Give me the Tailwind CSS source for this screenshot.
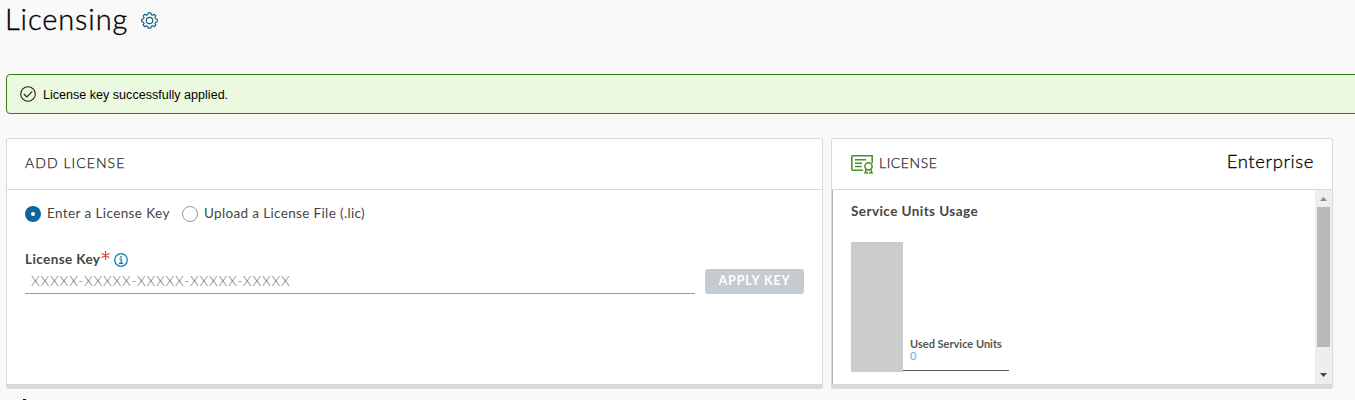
<!DOCTYPE html>
<html lang="en">
<head>
<meta charset="utf-8">
<title>Licensing</title>
<script src="https://cdn.jsdelivr.net/npm/@tailwindcss/browser@4"></script>
</head>
<body class="w-[1355px] h-[400px] overflow-hidden bg-[#f9f9f9] font-['Lato',sans-serif] text-[#454545] whitespace-nowrap">
<div class="flex flex-col h-[400px] pl-[6px]">
  <header class="flex items-center h-10 gap-[14px]">
    <h1 class="w-[122px] -ml-px -mt-[2px] text-[29px] leading-10 font-light tracking-[0.9px] text-black [-webkit-text-stroke:0.35px_black]"><span>Licensing</span></h1>
    <svg class="w-[17px] h-[17px] mt-px shrink-0" viewBox="0 0 16 16" fill="none" stroke="#0f628c" stroke-width="1.1" stroke-linejoin="round"><path d="M6.700 .8h2.600l.4 1.700 1.200.5 1.500-.9 1.600 1.600-.9 1.500.5 1.200 1.700.4v2.400l-1.700.4-.5 1.200.9 1.500-1.600 1.600-1.500-.9-1.200.5-.4 1.700H6.700l-.4-1.700-1.200-.5-1.500.9L2 12.300l.9-1.500-.5-1.200L.7 9.200V6.800l1.700-.4.5-1.200L2 3.700l1.600-1.600 1.500.9 1.200-.5z"/><circle cx="8" cy="8" r="3"/></svg>
  </header>
  <div class="mt-[34px] h-10 w-[1360px] shrink-0 rounded-[4px] border border-[#377a10] bg-[#ebf9e1] flex items-center pl-[13px] gap-[7px] font-['Liberation_Sans',sans-serif] text-[12.5px] text-black">
    <svg class="size-4" viewBox="0 0 16 16" fill="none" stroke="#222" stroke-width="1.1"><circle cx="8" cy="8" r="7.3"/><path d="M3.800 8l3 3L12.300 5.300"/></svg>
    <span class="pt-[2px] tracking-[0.03px]">License key successfully applied.</span>
  </div>
  <main class="mt-6 flex gap-2">
    <section class="w-[817px] h-[251px] rounded-[3px] border border-b-[5px] border-[#d9d9d9] bg-white">
      <div class="h-[51px] border-b border-[#d9d9d9] flex items-center pl-[18px] pb-[3px] text-[14px] text-[#222] font-light [-webkit-text-stroke:0.25px_#222] tracking-[1.05px]"><span>ADD LICENSE</span></div>
      <div class="px-[18px] pt-[14px] text-[13px]">
        <div class="flex items-center h-5">
          <span class="size-4 rounded-full bg-[#0f659b] flex items-center justify-center"><span class="size-1 rounded-full bg-white"></span></span>
          <span class="ml-[6px] w-[135px] -mt-px text-[13.5px] tracking-[0.4px]"><span>Enter a License Key</span></span>
          <span class="size-4 rounded-full border border-[#999]"></span>
          <span class="ml-[6px] -mt-px text-[13.5px] tracking-[0.35px]"><span>Upload a License File (.lic)</span></span>
        </div>
        <div class="mt-[25px] flex items-center h-5">
          <span class="w-[76px] mt-px text-[13.5px] font-bold tracking-[0.4px]">License Key</span>
          <svg class="size-[9px] mb-[7px] ml-[0px] mr-px" viewBox="0 0 9 9" stroke="#e8472c" stroke-width="1.100"><path d="M4.500 0v9M.6 2.200l7.800 4.600M8.400 2.200L.6 6.800"/></svg>
          <svg class="ml-[3px] mt-[2px] size-[14px]" viewBox="0 0 14 14" fill="none" stroke="#0079b8" stroke-width="1.200"><circle cx="7" cy="7" r="6.300"/><path d="M5.200 6h2v4.500M4.900 10.400h4.300"/><path d="M6.200 3.700h1.500" stroke-width="1.600"/></svg>
        </div>
        <div class="flex items-end h-[25px]">
          <div class="w-[670px] h-[25px] border-b border-[#999] pl-[6px] text-[14px] leading-[24px] font-light text-[#737373] tracking-[0.81px]"><span>XXXXX-XXXXX-XXXXX-XXXXX-XXXXX</span></div>
          <button class="ml-[10px] w-[99px] h-[25px] rounded-[3px] bg-[#c4ccd1] text-white text-[12.5px] font-bold tracking-[0.9px]">APPLY KEY</button>
        </div>
      </div>
    </section>
    <section class="w-[502px] h-[251px] rounded-[3px] border border-b-[5px] border-[#d9d9d9] bg-white">
      <div class="h-[51px] border-b border-[#d9d9d9] flex items-center justify-between pl-[19px] pr-[18px]">
        <div class="flex items-center gap-[5px] text-[14px] text-[#222]">
          <svg class="w-[23px] h-[19px]" viewBox="0 0 23 19" fill="none" stroke="#4b9128" stroke-width="1.600"><path d="M12 15.200H1.800a1 1 0 0 1-1-1V1.800a1 1 0 0 1 1-1h19.400V8M4 4.800h11M4 8.200h7M4 11.500h6.500"/><circle cx="17.500" cy="11.300" r="3.600"/><path d="M15.400 14.300l-1.400 3.500 1.900-.3.900 1.200M19.600 14.300l1.500 3.500-1.900-.3-.9 1.200" stroke-width="1.400"/></svg>
          <span class="font-light [-webkit-text-stroke:0.25px_#222] tracking-[0.55px] -mt-[3px]">LICENSE</span>
        </div>
        <span class="text-[18.5px] font-light [-webkit-text-stroke:0.3px_black] tracking-[0.6px] -mt-[5px] text-black">Enterprise</span>
      </div>
      <div class="flex h-[194px] border-l border-[#b5b5b5]">
        <div class="flex-1 pl-[18px] pt-[12px]">
          <div class="h-5 leading-[19px] text-[13.5px] font-bold tracking-[0.43px]"><span>Service Units Usage</span></div>
          <div class="mt-5 flex">
            <div class="w-[52px] h-[130px] bg-[#ccc]"></div>
            <div class="mt-[96px] h-[33px] w-[106px] border-b border-[#565656] pl-[7px] text-[11px] leading-3">
              <div class="font-bold text-[#565656]"><span>Used Service Units</span></div>
              <div class="text-[#6fa9cf]">0</div>
            </div>
          </div>
        </div>
        <div class="w-[17px] bg-[#eee] flex flex-col items-center">
          <svg class="w-[17px] h-[17px]" viewBox="0 0 17 17" fill="#8c8c8c"><path d="M5 11h7L8.500 7z"/></svg>
          <div class="w-[13px] h-[140px] bg-[#b9b9b9]"></div>
          <div class="flex-1"></div>
          <svg class="w-[17px] h-[17px]" viewBox="0 0 17 17" fill="#444"><path d="M5 6h7L8.500 10z"/></svg>
        </div>
      </div>
    </section>
  </main>
  <div class="mt-[10px] ml-[17px] w-[3px] h-px bg-black"></div>
</div>
</body>
</html>
